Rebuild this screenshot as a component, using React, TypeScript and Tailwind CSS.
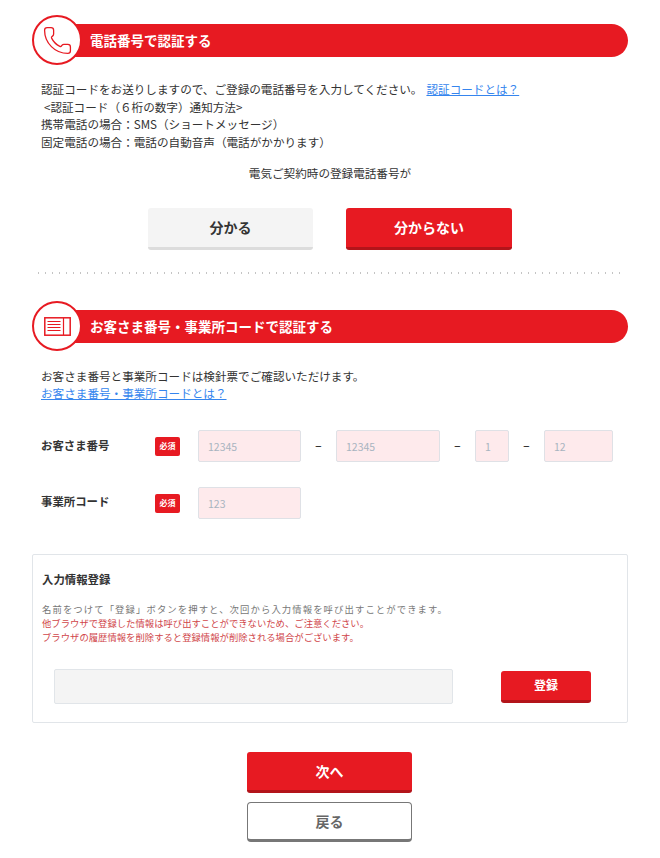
import React from 'react';
import { Phone } from 'lucide-react';

const font = 'font-["Noto_Sans_CJK_JP","Noto_Sans",sans-serif]';

const Heading: React.FC<{ title: string; icon: React.ReactNode }> = ({ title, icon }) => (
  <div className="flex items-center">
    <div className="relative z-10 w-[50px] h-[50px] shrink-0 rounded-full bg-white border-[2.5px] border-[#e71a22] flex items-center justify-center">
      {icon}
    </div>
    <div className="flex-1 h-[33px] -ml-[12px] pl-[20px] flex items-center bg-[#e71a22] rounded-r-full text-white text-[13.5px] font-bold">
      {title}
    </div>
  </div>
);

const Field: React.FC<{ value: string; width: string }> = ({ value, width }) => (
  <div className={`${width} h-[32px] pl-[9px] flex items-center bg-[#feeaec] border border-[#dfe1e6] rounded-[2px] text-[10.5px] text-[#a8b4c0]`}>
    {value}
  </div>
);

const Badge = () => (
  <div className="w-[25px] h-[19px] flex items-center justify-center bg-[#e71a22] rounded-[2px] text-white text-[8px] font-bold">必須</div>
);

const Dash = () => <div className="w-[35px] text-center text-[11px] font-medium text-[#333]">−</div>;

const App: React.FC = () => {
  return (
    <div className={`w-[660px] h-[858px] overflow-hidden bg-white px-[32px] pt-[15px] text-[#333] ${font}`}>
      <Heading title="電話番号で認証する" icon={<Phone className="w-[31px] h-[31px] text-[#e71a22]" strokeWidth={1} />} />

      <div className="mt-[16px] ml-[9px] text-[11.6px] leading-[17.6px]">
        <p>
          認証コードをお送りしますので、ご登録の電話番号を入力してください。
          <a className="ml-[4px] text-[#3585ee] underline">認証コードとは？</a>
        </p>
        <p className="pl-[3px]">&lt;認証コード（６桁の数字）通知方法&gt;</p>
        <p>携帯電話の場合：SMS（ショートメッセージ）</p>
        <p>固定電話の場合：電話の自動音声（電話がかかります）</p>
      </div>

      <p className="mt-[14px] text-center text-[11.6px] leading-[17px]">電気ご契約時の登録電話番号が</p>

      <div className="mt-[26px] flex justify-center gap-[33px]">
        <button className="w-[165px] h-[42px] bg-[#f4f4f4] border-b-[3px] border-[#dcdcdc] rounded-[3px] text-[14px] font-bold text-[#333]">分かる</button>
        <button className="w-[166px] h-[42px] bg-[#e71a22] border-b-[3px] border-[#b3141a] rounded-[3px] text-[14px] font-bold text-white">分からない</button>
      </div>

      <div className="mt-[22px] mx-[3px] h-[2px] bg-[radial-gradient(circle,#c4c4c4_1px,transparent_1px)] bg-[length:7px_2px]" />

      <div className="mt-[27px]">
        <Heading
          title="お客さま番号・事業所コードで認証する"
          icon={
            <svg width="27" height="19" viewBox="0 0 27 19" fill="none" stroke="#e71a22">
              <rect x="0.8" y="0.8" width="25.4" height="17.4" strokeWidth="1.5" />
              <path d="M19.5 1v17" strokeWidth="1.2" />
              <path d="M3.5 4.5h13M3.5 7.5h13M3.5 10.5h13M3.5 13.5h13" strokeWidth="1.1" />
            </svg>
          }
        />
      </div>

      <div className="mt-[17px] ml-[9px] text-[11.6px] leading-[17px]">
        <p>お客さま番号と事業所コードは検針票でご確認いただけます。</p>
        <a className="text-[#3585ee] underline">お客さま番号・事業所コードとは？</a>
      </div>

      <div className="mt-[28px] flex items-center h-[32px]">
        <div className="w-[123px] pl-[9px] text-[11.4px] font-bold -mt-[2px]">お客さま番号</div>
        <Badge />
        <div className="ml-[18px] flex items-center">
          <Field value="12345" width="w-[103px]" />
          <Dash />
          <Field value="12345" width="w-[104px]" />
          <Dash />
          <Field value="1" width="w-[34px]" />
          <Dash />
          <Field value="12" width="w-[69px]" />
        </div>
      </div>

      <div className="mt-[25px] flex items-center h-[32px]">
        <div className="w-[123px] pl-[9px] text-[11.4px] font-bold -mt-[3px]">事業所コード</div>
        <Badge />
        <div className="ml-[18px]">
          <Field value="123" width="w-[103px]" />
        </div>
      </div>

      <div className="mt-[35px] w-[596px] h-[169px] border border-[#e1e5e9] rounded-[2px] px-[9px] pt-[16px]">
        <h3 className="text-[11.4px] font-bold leading-[17px]">入力情報登録</h3>
        <div className="mt-[14px] text-[9.35px] leading-[14px]">
          <p className="text-[#777] tracking-[1.1px]">名前をつけて「登録」ボタンを押すと、次回から入力情報を呼び出すことができます。</p>
          <p className="text-[#d0464a]">他ブラウザで登録した情報は呼び出すことができないため、ご注意ください。</p>
          <p className="text-[#d0464a]">ブラウザの履歴情報を削除すると登録情報が削除される場合がございます。</p>
        </div>
        <div className="mt-[25px] ml-[12px] flex items-center">
          <div className="w-[399px] h-[35px] bg-[#f4f4f4] border border-[#e1e5e9] rounded-[2px]" />
          <button className="ml-[48px] w-[90px] h-[32px] bg-[#e71a22] border-b-[3px] border-[#b3141a] rounded-[3px] text-[12px] font-bold text-white">登録</button>
        </div>
      </div>

      <div className="mt-[29px] flex flex-col items-center gap-[9px] pr-[1px]">
        <button className="w-[165px] h-[41px] bg-[#e71a22] border-b-[3px] border-[#b3141a] rounded-[3px] text-[14px] font-bold text-white">次へ</button>
        <button className="w-[165px] h-[40px] bg-white border border-b-[3px] border-[#777] rounded-[4px] text-[14px] font-bold text-[#666]">戻る</button>
      </div>
    </div>
  );
};

export default App;
